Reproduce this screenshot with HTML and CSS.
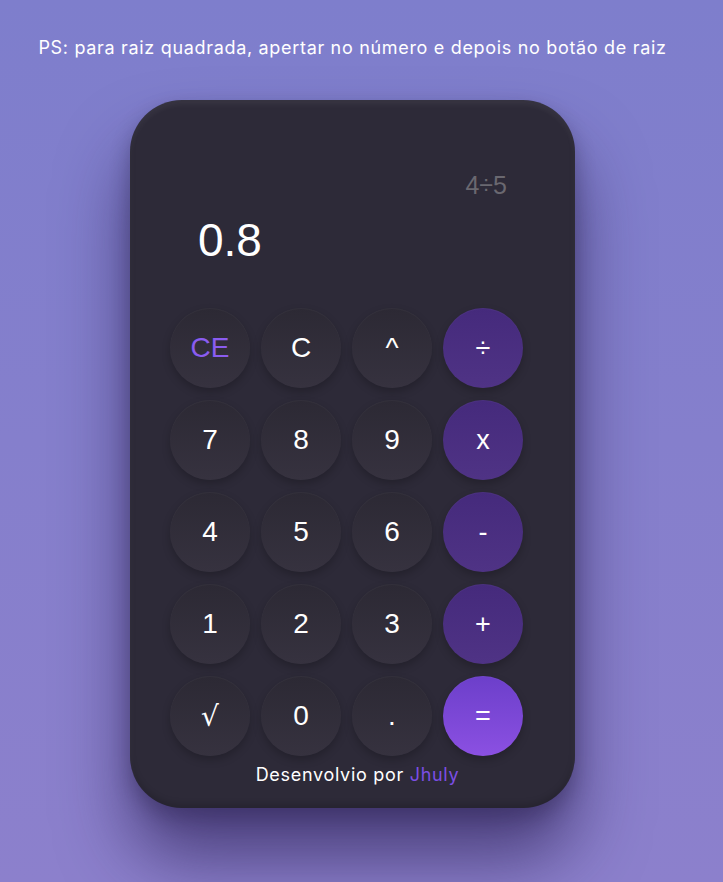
FILE: index.html
```html
<!DOCTYPE html>
<html lang="pt-BR">
<head>
<meta charset="utf-8">
<title>Calculadora</title>
<link rel="stylesheet" href="styles.css">
</head>
<body>
<main class="page">
  <p class="hint">PS: para raiz quadrada, apertar no número e depois no botão de raiz</p>
  <section class="calc">
    <div class="display">
      <div class="prev">4÷5</div>
      <div class="current">0.8</div>
    </div>
    <div class="keys">
      <button class="key key-ce">CE</button>
      <button class="key">C</button>
      <button class="key">^</button>
      <button class="key key-op">÷</button>
      <button class="key">7</button>
      <button class="key">8</button>
      <button class="key">9</button>
      <button class="key key-op">x</button>
      <button class="key">4</button>
      <button class="key">5</button>
      <button class="key">6</button>
      <button class="key key-op">-</button>
      <button class="key">1</button>
      <button class="key">2</button>
      <button class="key">3</button>
      <button class="key key-op">+</button>
      <button class="key key-root">√</button>
      <button class="key">0</button>
      <button class="key">.</button>
      <button class="key key-eq">=</button>
    </div>
    <p class="credit">Desenvolvio por <span class="author">Jhuly</span></p>
  </section>
</main>
</body>
</html>
```

FILE: styles.css
```css
html, body {
  margin: 0;
  height: 100%;
}

body {
  background: linear-gradient(180deg, #7e7ecc 0%, #8c80cc 100%);
  font-family: "Inter", "Open Sans", sans-serif;
  overflow: hidden;
}

.page {
  width: 705px;
  display: flex;
  flex-direction: column;
  align-items: center;
}

.hint {
  margin: 38px 0 0;
  color: #ffffff;
  font-size: 18px;
  line-height: 20px;
  letter-spacing: 0.68px;
  white-space: nowrap;
}

.calc {
  box-sizing: border-box;
  margin-top: 42px;
  width: 445px;
  height: 708px;
  padding: 0 40px;
  border-radius: 52px;
  background: #2d2a38;
  box-shadow:
    inset 0 4px 6px rgba(255, 255, 255, 0.06),
    inset 0 -4px 6px rgba(0, 0, 0, 0.15),
    0 50px 70px rgba(40, 28, 80, 0.65),
    0 10px 20px rgba(20, 15, 40, 0.3);
  display: flex;
  flex-direction: column;
}

.display {
  padding: 0 28px;
  font-family: "Liberation Sans", Arial, sans-serif;
}

.prev {
  margin-top: 70px;
  text-align: right;
  color: #6a6870;
  font-size: 25px;
  line-height: 30px;
}

.current {
  margin-top: 15px;
  color: #ffffff;
  font-size: 46px;
  line-height: 50px;
}

.keys {
  margin-top: 43px;
  display: grid;
  grid-template-columns: repeat(4, 80px);
  grid-auto-rows: 80px;
  column-gap: 11px;
  row-gap: 12px;
}

.key {
  border: none;
  border-radius: 50%;
  padding: 0;
  background: linear-gradient(180deg, #2c2934 0%, #36323f 100%);
  color: #ffffff;
  font-family: "Liberation Sans", Arial, sans-serif;
  font-size: 28px;
  box-shadow:
    0 4px 8px rgba(0, 0, 0, 0.22),
    inset 0 1px 1px rgba(255, 255, 255, 0.04);
  display: flex;
  align-items: center;
  justify-content: center;
}

.key-root {
  font-family: "DejaVu Serif", serif;
  font-weight: 300;
}

.key-ce {
  color: #8a5cf0;
}

.key-op {
  background: linear-gradient(180deg, #452a7c 0%, #4f3385 100%);
  font-size: 27px;
}

.key-eq {
  background: linear-gradient(180deg, #6c3fca 0%, #8b50e2 100%);
  font-size: 27px;
}

.credit {
  margin: 8px 0 0;
  padding-left: 10px;
  text-align: center;
  color: #ffffff;
  font-size: 18px;
  line-height: 22px;
  letter-spacing: 0.7px;
}

.author {
  color: #7c4ee4;
}
```
